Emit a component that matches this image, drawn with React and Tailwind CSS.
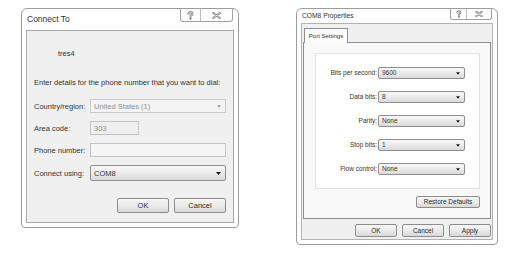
import React from "react";

function Arrow({ color = "#111", w = 5, h = 3 }) {
  return (
    <svg width={w} height={h} viewBox="0 0 5 3" className="shrink-0">
      <path d="M0 0H5L2.5 3Z" fill={color} />
    </svg>
  );
}

function HelpIcon({ w = 7, h = 9 }) {
  return (
    <svg width={w} height={h} viewBox="0 0 7 9">
      <path d="M1.6 2.8 C1.6 0.5 5.4 0.5 5.4 2.8 C5.4 4.3 3.5 4.2 3.5 5.7" fill="none" stroke="#7a7a7a" strokeWidth="2.1" strokeLinecap="round" />
      <circle cx="3.5" cy="7.7" r="1.1" fill="#7a7a7a" />
      <path d="M1.6 2.8 C1.6 0.5 5.4 0.5 5.4 2.8 C5.4 4.3 3.5 4.2 3.5 5.7" fill="none" stroke="#fff" strokeWidth="0.7" strokeLinecap="round" />
    </svg>
  );
}

function CloseIcon({ w = 9, h = 7 }) {
  return (
    <svg width={w} height={h} viewBox="0 0 9 7">
      <path d="M1.3 1 L7.7 6 M7.7 1 L1.3 6" stroke="#7a7a7a" strokeWidth="2.2" strokeLinecap="round" />
      <path d="M1.3 1 L7.7 6 M7.7 1 L1.3 6" stroke="#fff" strokeWidth="0.7" strokeLinecap="round" />
    </svg>
  );
}

function WinButton({ children, className = "" }) {
  return (
    <div
      className={
        "flex items-center justify-center border border-[#8d8d8d] rounded-[2px] bg-linear-to-b from-[#f6f6f6] via-[#ebebeb] to-[#d8d8d8] text-[#2a2a2a] " +
        className
      }
    >
      {children}
    </div>
  );
}

function PropRow({ label, value, first }) {
  return (
    <div className={"flex items-center h-[12px] " + (first ? "mt-[13px]" : "mt-[12px]")}>
      <span className="w-[62px] pr-[1px] text-right">{label}</span>
      <div className="w-[87px] h-full flex items-center justify-between border border-[#8f8f8f] rounded-[2px] bg-linear-to-b from-[#f7f7f7] via-[#ececec] to-[#d9d9d9] pl-[3px] pr-[4px]">
        <span>{value}</span>
        <Arrow w={4} h={3} />
      </div>
    </div>
  );
}

export default function App() {
  return (
    <div className="w-[526px] h-[278px] bg-white flex items-start gap-[57px] pt-[8px] pl-[21px] font-['Liberation_Sans',Arial,sans-serif] text-[#333333] overflow-hidden">
      {/* Connect To dialog */}
      <div className="w-[218px] h-[220px] shrink-0 flex flex-col border border-[#9d9d9d] rounded-t-[6px] rounded-b-[4px] bg-white px-[4px] pb-[4px]">
        <div className="h-[21px] shrink-0 flex justify-between items-start">
          <span className="text-[8.5px] leading-[10px] mt-[5px] ml-[1px]">Connect To</span>
          <div className="flex h-[13px] mr-[1px] border border-t-0 border-[#a3a3a3] rounded-b-[3px] bg-white">
            <div className="w-[20px] flex items-center justify-center border-r border-[#bdbdbd]">
              <HelpIcon />
            </div>
            <div className="w-[31px] flex items-center justify-center">
              <CloseIcon />
            </div>
          </div>
        </div>
        <div className="flex-1 border border-[#a8a8a8] bg-[#f0f0f0] flex flex-col pl-[7px] pr-[7px] text-[7.5px] leading-[9px]">
          <div className="mt-[18px] ml-[24px] h-[9px]">tres4</div>
          <div className="mt-[20px] h-[9px] whitespace-nowrap">
            Enter details for the phone number that you want to dial:
          </div>
          <div className="mt-[12px] flex items-center h-[14px]">
            <span className="w-[56px] whitespace-nowrap">Country/region:</span>
            <div className="w-[136px] h-full flex items-center justify-between border border-[#cacaca] bg-[#f4f4f4] pl-[3px] pr-[4px] text-[#8f8f8f]">
              <span>United States (1)</span>
              <Arrow color="#9a9a9a" w={4} h={3} />
            </div>
          </div>
          <div className="mt-[8px] flex items-center h-[14px]">
            <span className="w-[56px]">Area code:</span>
            <div className="w-[49px] h-full flex items-center border border-[#c4c4c4] bg-[#efefef] pl-[3px] text-[#8f8f8f]">
              303
            </div>
          </div>
          <div className="mt-[8px] flex items-center h-[14px]">
            <span className="w-[56px] whitespace-nowrap">Phone number:</span>
            <div className="w-[136px] h-full border border-[#c4c4c4] bg-[#f5f5f5]"></div>
          </div>
          <div className="mt-[8px] flex items-center h-[16px]">
            <span className="w-[56px] whitespace-nowrap">Connect using:</span>
            <div className="w-[136px] h-full flex items-center justify-between border border-[#8f8f8f] rounded-[2px] bg-linear-to-b from-[#f7f7f7] via-[#ececec] to-[#d8d8d8] pl-[3px] pr-[4px]">
              <span>COM8</span>
              <Arrow w={5} h={3} />
            </div>
          </div>
          <div className="mt-[17px] flex justify-end gap-[5px]">
            <WinButton className="w-[52px] h-[15px]">OK</WinButton>
            <WinButton className="w-[52px] h-[15px]">Cancel</WinButton>
          </div>
        </div>
      </div>

      {/* COM8 Properties dialog */}
      <div className="w-[202px] h-[237px] shrink-0 flex flex-col border border-[#9d9d9d] rounded-t-[6px] rounded-b-[4px] bg-white px-[4px] pb-[4px]">
        <div className="h-[14px] shrink-0 flex justify-between items-start">
          <span className="text-[6.7px] leading-[8px] mt-[3px] ml-[1px] whitespace-nowrap">COM8 Properties</span>
          <div className="flex h-[11px] mr-[1px] border border-t-0 border-[#a3a3a3] rounded-b-[3px] bg-white">
            <div className="w-[16px] flex items-center justify-center border-r border-[#bdbdbd]">
              <HelpIcon w={6} h={8} />
            </div>
            <div className="w-[24px] flex items-center justify-center">
              <CloseIcon w={8} h={6} />
            </div>
          </div>
        </div>
        <div className="flex-1 border border-[#b2b2b2] bg-[#f0f0f0] flex flex-col px-[1px] text-[6.5px] leading-[8px]">
          <div className="pt-[4px] flex pl-[1px]">
            <div className="relative z-10 -mb-px h-[15px] w-[44px] border border-b-0 border-[#8e8f8f] bg-[#fbfbfb] text-[6px] flex items-center justify-center whitespace-nowrap">
              Port Settings
            </div>
          </div>
          <div className="h-[177px] border border-[#8e8f8f] bg-[#f9f9f9] flex flex-col">
            <div className="mt-[10px] ml-[11px] w-[165px] h-[136px] border border-[#e2e2e2] bg-white flex flex-col">
              <PropRow first label="Bits per second:" value="9600" />
              <PropRow label="Data bits:" value="8" />
              <PropRow label="Parity:" value="None" />
              <PropRow label="Stop bits:" value="1" />
              <PropRow label="Flow control:" value="None" />
            </div>
            <div className="mt-[7px] mr-[10px] flex justify-end">
              <WinButton className="w-[64px] h-[12px] whitespace-nowrap">Restore Defaults</WinButton>
            </div>
          </div>
          <div className="mt-[5px] flex justify-end gap-[5px]">
            <WinButton className="w-[42px] h-[13px]">OK</WinButton>
            <WinButton className="w-[42px] h-[13px]">Cancel</WinButton>
            <WinButton className="w-[42px] h-[13px]">Apply</WinButton>
          </div>
        </div>
      </div>
    </div>
  );
}
